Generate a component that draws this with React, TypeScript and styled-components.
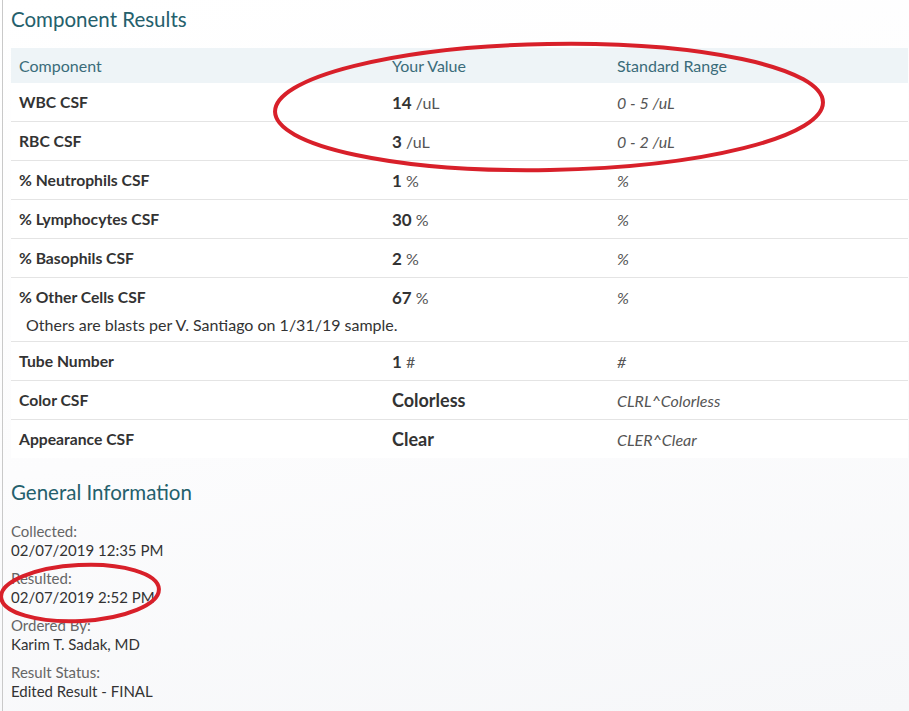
import React from "react";
import styled, { createGlobalStyle } from "styled-components";

const Global = createGlobalStyle`
  html, body { margin: 0; padding: 0; }
  body {
    width: 909px;
    height: 711px;
    overflow: hidden;
    font-family: "Lato", "Noto Sans", sans-serif;
    background: linear-gradient(170deg, #ffffff 0%, #fcfcfd 55%, #f6f7f9 100%);
    color: #333;
  }
`;

const Page = styled.div`
  position: relative;
  width: 909px;
  height: 711px;
  box-sizing: border-box;
  border-left: 1px solid #c9c9c9;
  margin-left: 2px;
  padding: 5px 3px 0 8px;
`;

const SectionTitle = styled.h2`
  margin: 0;
  font-size: 20.5px;
  font-weight: 400;
  color: #24606c;
  line-height: 28px;
`;

const Table = styled.div`
  margin-top: 15px;
  display: grid;
  grid-template-columns: 373px 225px 1fr;
  background: #fff;
`;

const HeadCell = styled.div`
  background: #eef4f7;
  color: #3a6c7a;
  font-size: 16px;
  height: 35px;
  display: flex;
  align-items: center;
  padding-left: 8px;
`;

const Cell = styled.div<{ $first?: boolean }>`
  height: 38px;
  display: flex;
  align-items: center;
  padding-left: 8px;
  border-top: ${(p) => (p.$first ? "none" : "1px solid #e4e4e4")};
`;

const Name = styled(Cell)`
  font-weight: 700;
  font-size: 15.7px;
  color: #333;
`;

const Value = styled(Cell)<{ $big?: boolean }>`
  font-size: ${(p) => (p.$big ? "18px" : "16px")};
  font-weight: ${(p) => (p.$big ? 700 : 400)};
  color: #333;
  b { font-weight: 700; font-size: 17px; margin-right: 4px; }
  span { color: #555; font-size: 16px; }
`;

const Range = styled(Cell)`
  font-style: italic;
  font-size: 16px;
  color: #555;
`;

const Note = styled.div`
  grid-column: 1 / -1;
  font-size: 16px;
  color: #333;
  padding: 0 0 7px 15px;
  line-height: 18px;
`;

const InfoBlock = styled.div`
  margin-top: 20px;
`;

const InfoList = styled.dl`
  margin: 16px 0 0;
  display: flex;
  flex-direction: column;
  gap: 9px;
`;

const InfoItem = styled.div`
  font-size: 15px;
  line-height: 19px;
`;

const Label = styled.dt`
  color: #666;
`;

const Val = styled.dd`
  margin: 0;
  color: #333;
`;

const Overlay = styled.svg`
  position: absolute;
  left: -3px;
  top: 0;
  pointer-events: none;
`;

type Row = { name: string; value: string; unit?: string; range: string; big?: boolean; note?: string };

const rows: Row[] = [
  { name: "WBC CSF", value: "14", unit: "/uL", range: "0 - 5 /uL" },
  { name: "RBC CSF", value: "3", unit: "/uL", range: "0 - 2 /uL" },
  { name: "% Neutrophils CSF", value: "1", unit: "%", range: "%" },
  { name: "% Lymphocytes CSF", value: "30", unit: "%", range: "%" },
  { name: "% Basophils CSF", value: "2", unit: "%", range: "%" },
  { name: "% Other Cells CSF", value: "67", unit: "%", range: "%", note: "Others are blasts per V. Santiago on 1/31/19 sample." },
  { name: "Tube Number", value: "1", unit: "#", range: "#" },
  { name: "Color CSF", value: "Colorless", range: "CLRL^Colorless", big: true },
  { name: "Appearance CSF", value: "Clear", range: "CLER^Clear", big: true },
];

const info = [
  ["Collected:", "02/07/2019 12:35 PM"],
  ["Resulted:", "02/07/2019 2:52 PM"],
  ["Ordered By:", "Karim T. Sadak, MD"],
  ["Result Status:", "Edited Result - FINAL"],
];

export default function App() {
  return (
    <>
      <Global />
      <Page>
        <SectionTitle>Component Results</SectionTitle>
        <Table>
          <HeadCell>Component</HeadCell>
          <HeadCell>Your Value</HeadCell>
          <HeadCell>Standard Range</HeadCell>
          {rows.map((r, i) => (
            <React.Fragment key={r.name}>
              <Name $first={i === 0}>{r.name}</Name>
              <Value $first={i === 0} $big={r.big}>
                {r.big ? r.value : (<><b>{r.value}</b><span>{r.unit}</span></>)}
              </Value>
              <Range $first={i === 0}>{r.range}</Range>
              {r.note && <Note>{r.note}</Note>}
            </React.Fragment>
          ))}
        </Table>
        <InfoBlock>
          <SectionTitle>General Information</SectionTitle>
          <InfoList>
            {info.map(([l, v]) => (
              <InfoItem key={l}>
                <Label>{l}</Label>
                <Val>{v}</Val>
              </InfoItem>
            ))}
          </InfoList>
        </InfoBlock>
        <Overlay width="909" height="711" viewBox="0 0 909 711">
          <ellipse cx="549" cy="107" rx="274" ry="63" fill="none" stroke="#d8202a" strokeWidth="4" transform="rotate(-1 549 107)" />
          <ellipse cx="80" cy="593" rx="79" ry="28" fill="none" stroke="#d8202a" strokeWidth="4" transform="rotate(-3 80 593)" />
        </Overlay>
      </Page>
    </>
  );
}
